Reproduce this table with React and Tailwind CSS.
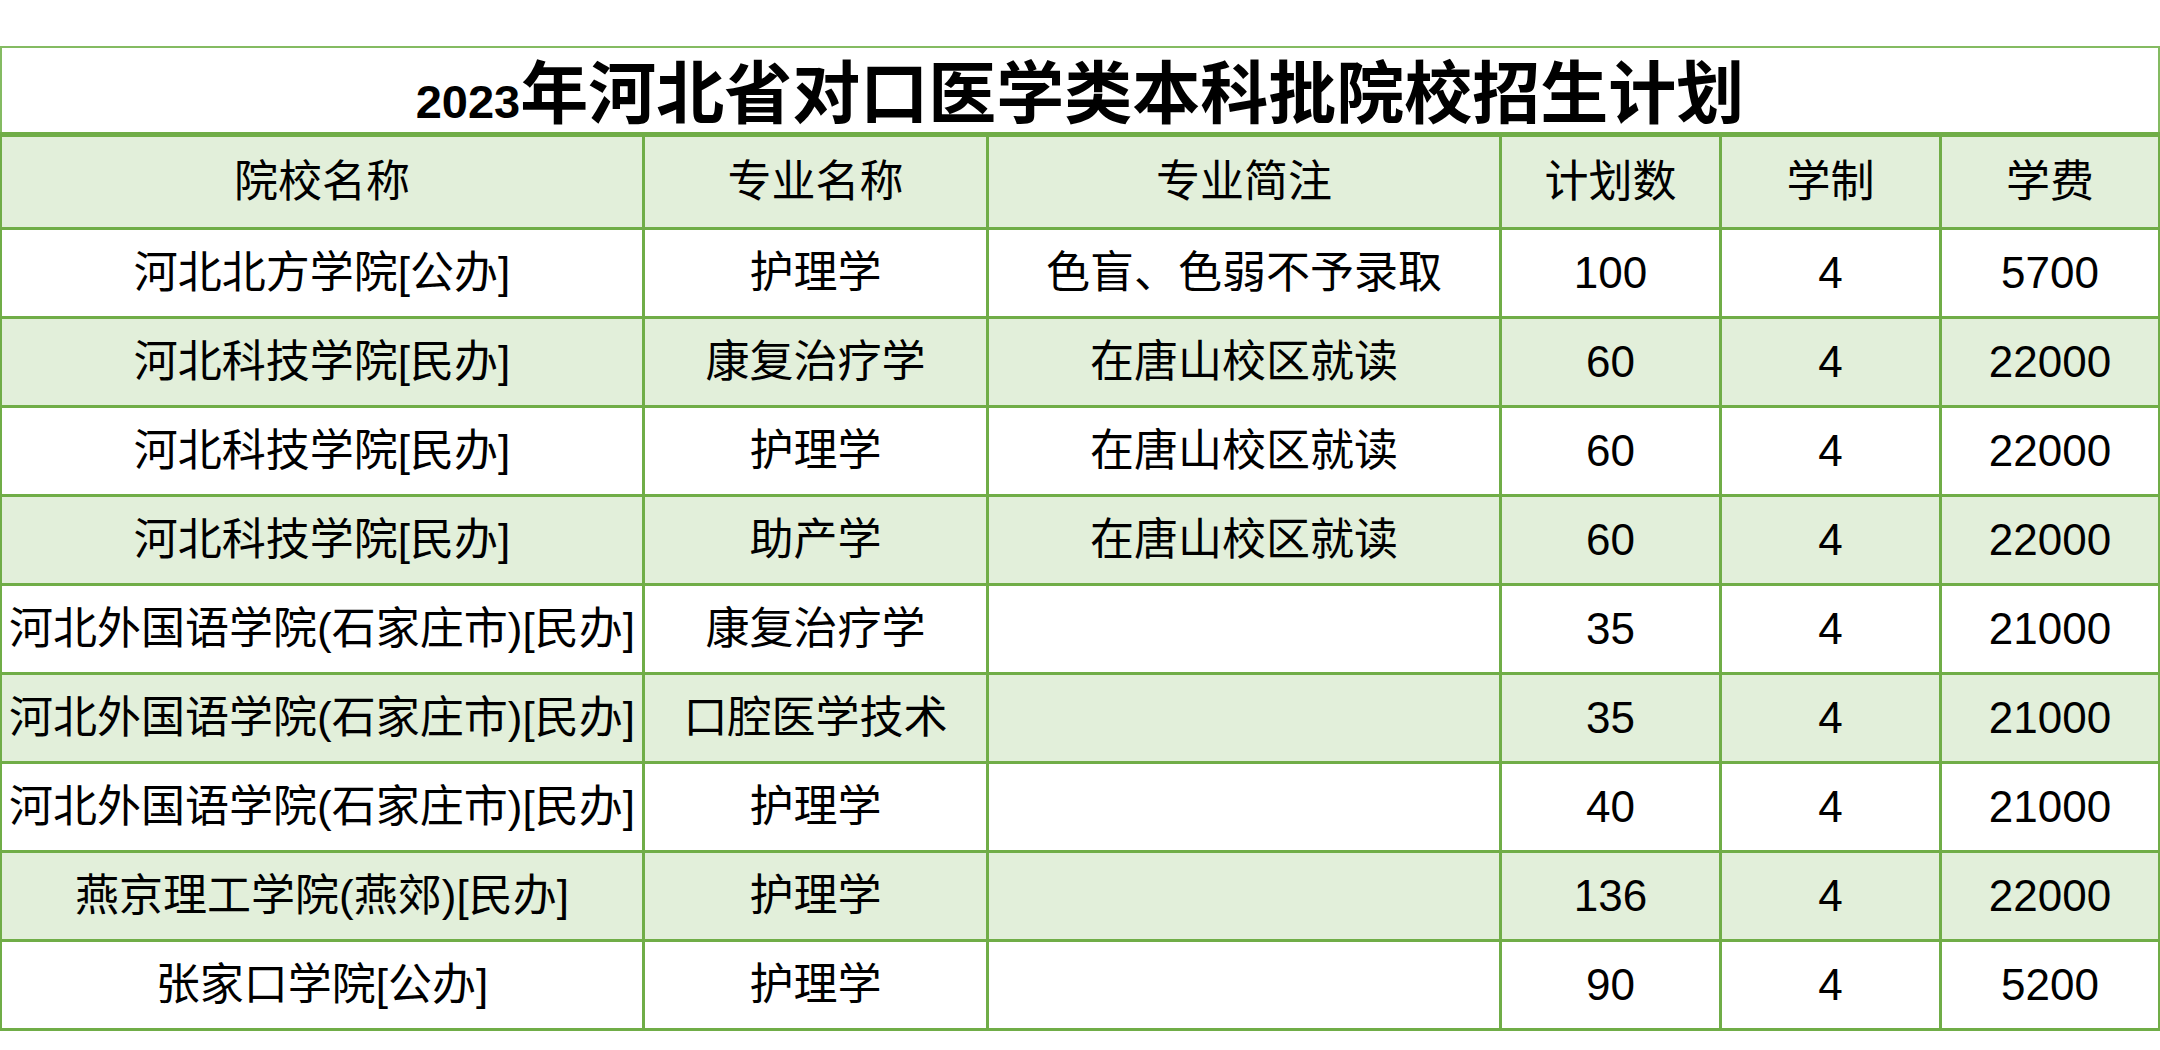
const rows = [
  ["河北北方学院[公办]", "护理学", "色盲、色弱不予录取", "100", "4", "5700"],
  ["河北科技学院[民办]", "康复治疗学", "在唐山校区就读", "60", "4", "22000"],
  ["河北科技学院[民办]", "护理学", "在唐山校区就读", "60", "4", "22000"],
  ["河北科技学院[民办]", "助产学", "在唐山校区就读", "60", "4", "22000"],
  ["河北外国语学院(石家庄市)[民办]", "康复治疗学", "", "35", "4", "21000"],
  ["河北外国语学院(石家庄市)[民办]", "口腔医学技术", "", "35", "4", "21000"],
  ["河北外国语学院(石家庄市)[民办]", "护理学", "", "40", "4", "21000"],
  ["燕京理工学院(燕郊)[民办]", "护理学", "", "136", "4", "22000"],
  ["张家口学院[公办]", "护理学", "", "90", "4", "5200"],
];

const headers = ["院校名称", "专业名称", "专业简注", "计划数", "学制", "学费"];

export default function App() {
  return (
    <div
      className="w-[2160px] h-[1050px] bg-white pt-[46px] text-black"
      style={{ fontFamily: '"Liberation Sans", "Noto Sans CJK SC", sans-serif' }}
    >
      {/* title */}
      <div className="h-[86px] border-t-2 border-x-2 border-[#84bb62] flex items-center justify-center pt-[8px]">
        <h1 className="font-bold text-[68px] leading-none tracking-normal">
          <span className="text-[47px]">2023</span>年河北省对口医学类本科批院校招生计划
        </h1>
      </div>

      {/* table */}
      <div className="bg-[#70ad47] pt-[5px] px-[2px] pb-[3px] grid grid-cols-[640px_341px_510px_217px_217px_1fr] gap-[3px]">
        {headers.map((h) => (
          <div key={h} className="h-[90px] bg-[#e2efda] flex items-center justify-center text-[44px] leading-none">
            {h}
          </div>
        ))}
        {rows.map((r, i) =>
          r.map((c, j) => (
            <div
              key={i + "-" + j}
              className={
                "h-[86px] flex items-center justify-center text-[44px] leading-none whitespace-nowrap " +
                (i % 2 === 1 ? "bg-[#e2efda]" : "bg-white")
              }
            >
              {c}
            </div>
          ))
        )}
      </div>
    </div>
  );
}
